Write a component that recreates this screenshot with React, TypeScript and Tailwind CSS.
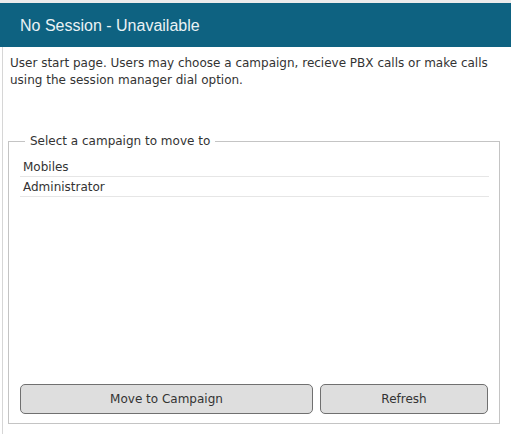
import React from 'react';

const campaigns = ['Mobiles', 'Administrator'];

export default function App() {
  return (
    <div className="w-[511px] h-[434px] bg-white overflow-hidden pt-[3px] bg-[linear-gradient(#ebebeb_0_3px,#ffffff_3px)]">
      {/* Header */}
      <div className="h-[44px] bg-[#0e6281] flex items-center pl-[20px] pt-[2px]">
        <h1 className="text-[16px] text-[#eaf2f5] font-['Liberation_Sans',Arial,sans-serif]">
          No Session - Unavailable
        </h1>
      </div>

      {/* Body */}
      <div className="ml-[2px] border-l border-[#d6d6d6] h-[387px] pl-[5px] font-['DejaVu_Sans',Verdana,sans-serif] text-[12px] text-[#333333]">
        <p className="pt-[8px] pl-[2px] pr-[8px] leading-[17px]">
          User start page. Users may choose a campaign, recieve PBX calls or make calls using the session manager dial option.
        </p>

        <fieldset className="mt-[44px] mr-[11px] border border-[#c4c4c4]">
          <legend className="ml-[16px] px-[5px] leading-[16px] text-[#333333]">Select a campaign to move to</legend>
          <div className="h-[274px] flex flex-col pl-[11px] pr-[10px] pt-[8px] pb-[9px]">
            <ul className="flex-1">
              {campaigns.map((c) => (
                <li key={c} className="h-[20px] border-b border-[#e6e6e6] pl-[3px] pt-[1px] flex items-center">
                  {c}
                </li>
              ))}
            </ul>
            <div className="flex gap-[7px] pr-[1px]">
              <button className="w-[293px] h-[30px] bg-[#dedede] border border-[#707070] rounded-[5px] text-[#333333]">
                Move to Campaign
              </button>
              <button className="flex-1 h-[30px] bg-[#dedede] border border-[#707070] rounded-[5px] text-[#333333]">
                Refresh
              </button>
            </div>
          </div>
        </fieldset>
      </div>
    </div>
  );
}
